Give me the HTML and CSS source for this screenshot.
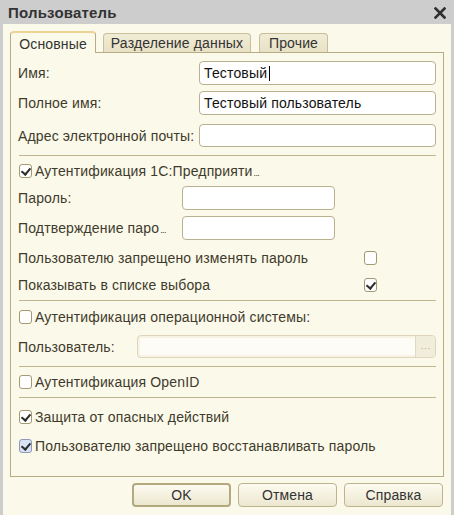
FILE: index.html
```html
<!DOCTYPE html>
<html lang="ru">
<head>
	<meta charset="UTF-8">
	<title>Пользователь</title>
	<link rel="stylesheet" href="styles.css">
</head>
<body>
	<div class="window">
		<div class="titlebar">
			<span class="title">Пользователь</span>
			<svg class="close" width="12" height="12" viewBox="0 0 12 12">
				<path d="M1.5 1.5 L10.5 10.5 M10.5 1.5 L1.5 10.5" stroke="#2f2f2f" stroke-width="2.6" stroke-linecap="square"/>
			</svg>
		</div>

		<div class="content">
			<div class="tabs">
				<div class="tab active">Основные</div>
				<div class="tab t2">Разделение данных</div>
				<div class="tab t3">Прочие</div>
			</div>

			<div class="panel">
				<div class="row r1">
					<span class="label w-main">Имя:</span>
					<div class="input grow"><span class="value">Тестовый</span><span class="caret"></span></div>
				</div>
				<div class="row r2">
					<span class="label w-main">Полное имя:</span>
					<div class="input grow"><span class="value">Тестовый пользователь</span></div>
				</div>
				<div class="row r3">
					<span class="label w-main">Адрес электронной почты:</span>
					<div class="input grow"></div>
				</div>

				<div class="sep s1"></div>

				<label class="check c1">
					<span class="box checked"></span>
					<span>Аутентификация 1С:Предприяти<span class="more">...</span></span>
				</label>
				<div class="row r4">
					<span class="label w-pass">Пароль:</span>
					<div class="input short"></div>
				</div>
				<div class="row r5">
					<span class="label w-pass">Подтверждение паро<span class="more">...</span></span>
					<div class="input short"></div>
				</div>
				<div class="row flag f1">
					<span class="label w-flag">Пользователю запрещено изменять пароль</span>
					<span class="box"></span>
				</div>
				<div class="row flag f2">
					<span class="label w-flag">Показывать в списке выбора</span>
					<span class="box checked"></span>
				</div>

				<div class="sep s2"></div>

				<label class="check c2">
					<span class="box"></span>
					<span>Аутентификация операционной системы:</span>
				</label>
				<div class="row r6">
					<span class="label w-user">Пользователь:</span>
					<div class="input grow disabled">
						<span class="fill"></span>
						<span class="pick">···</span>
					</div>
				</div>

				<div class="sep s3"></div>

				<label class="check c3">
					<span class="box"></span>
					<span>Аутентификация OpenID</span>
				</label>

				<div class="sep s4"></div>

				<label class="check c4">
					<span class="box checked"></span>
					<span>Защита от опасных действий</span>
				</label>
				<label class="check c5">
					<span class="box checked hover"></span>
					<span>Пользователю запрещено восстанавливать пароль</span>
				</label>
			</div>

			<div class="buttons">
				<button class="default">OK</button>
				<button>Отмена</button>
				<button>Справка</button>
			</div>
		</div>
	</div>
</body>
</html>
```

FILE: styles.css
```css
:root {
	--cream: #fbf9ea;
	--frame: #b7ac84;
	--text: #3f3b2c;
}

* {
	box-sizing: border-box;
}

body {
	margin: 0;
	font-family: "Liberation Sans", Arial, sans-serif;
	font-size: 14px;
	letter-spacing: 0.15px;
	color: var(--text);
	background: #cdcdcd;
}

.window {
	width: 454px;
	height: 515px;
	background: #cdcdcd;
	padding: 0 3px;
	display: flex;
	flex-direction: column;
}

/* title bar */

.titlebar {
	height: 24px;
	display: flex;
	align-items: center;
	justify-content: space-between;
	padding: 1px 5px 0 5px;
}

.title {
	font-weight: bold;
	font-size: 15px;
	letter-spacing: 0.2px;
	color: #333;
}

.close {
	margin-top: 1px;
}

.content {
	flex: 1;
	background: var(--cream);
	padding: 7px 8px 0 7px;
}

/* tabs */

.tabs {
	display: flex;
	align-items: flex-end;
	height: 21px;
}

.tab {
	height: 19px;
	margin-right: 7px;
	line-height: 18px;
	text-align: center;
	color: #333;
	background: linear-gradient(#f1ecd6, #e8e1c6);
	border: 1px solid #c9be98;
	border-bottom: none;
	border-radius: 4px 4px 0 0;
}

.tab.t2 {
	width: 148px;
	margin-right: 8px;
}

.tab.t3 {
	width: 69px;
}

.tab.active {
	position: relative;
	z-index: 1;
	width: 86px;
	height: 22px;
	margin-bottom: -1px;
	padding-top: 2px;
	background: var(--cream);
	border-color: var(--frame);
	border-top: 2px solid #ecd495;
}

/* tab page */

.panel {
	width: 434px;
	height: 425px;
	border: 1px solid var(--frame);
	padding: 0 7px 0 7px;
	display: flex;
	flex-direction: column;
}

.row {
	display: flex;
	align-items: center;
	height: 24px;
}

.label {
	flex: none;
	white-space: nowrap;
}

/* cut-off captions end in small tight dots */
.more {
	font-size: 9px;
	letter-spacing: -0.6px;
	margin-left: 1px;
}

.w-main { width: 181px; }
.w-pass { width: 164px; }
.w-user { width: 119px; }
.w-flag { width: 346px; }

.input {
	height: 100%;
	background: #fff;
	border: 1px solid #b9b08d;
	border-radius: 4px;
	display: flex;
	align-items: center;
	padding: 0 4px;
	color: #111;
}

.grow { flex: 1; }
.short { width: 153px; }

.caret {
	width: 1px;
	height: 15px;
	margin-left: 2px;
	background: #000;
}

.input.disabled {
	padding: 0;
	background: #f7f4e4;
	border-color: #ddd6bd;
	overflow: hidden;
}

.input.disabled .fill {
	flex: 1;
	align-self: stretch;
	margin: 2px 0 2px 2px;
	background: #fdfcf6;
}

.pick {
	width: 20px;
	align-self: stretch;
	border-left: 1px solid #e0dac4;
	background: #f1eddb;
	color: #b5b09c;
	font-size: 10px;
	letter-spacing: 0;
	display: flex;
	align-items: center;
	justify-content: center;
	padding-top: 3px;
}

.sep {
	height: 1px;
	flex: none;
	background: #bfb58e;
	margin-left: 1px;
}

.check {
	display: flex;
	align-items: center;
	height: 16px;
	gap: 3px;
	padding-left: 1px;
}

.box {
	flex: none;
	width: 13px;
	height: 14px;
	border: 1px solid #a49a72;
	border-radius: 3px;
	background: #fff;
	position: relative;
}

.box.checked::after {
	content: "";
	position: absolute;
	left: 3px;
	top: 1px;
	width: 4px;
	height: 7px;
	border: solid #2e2e2e;
	border-width: 0 2px 2px 0;
	transform: rotate(40deg);
}

.box.hover {
	background: #d9e3f6;
	border-color: #8f98b5;
}

/* vertical rhythm of the page */

.r1 { margin-top: 8px; }
.r2 { margin-top: 6px; }
.r3 { margin-top: 9px; height: 23px; }
.s1 { margin-top: 8px; }
.c1 { margin-top: 7px; }
.r4 { margin-top: 7px; }
.r5 { margin-top: 6px; }
.f1 { margin-top: 10px; height: 16px; }
.f2 { margin-top: 11px; height: 16px; }
.s2 { margin-top: 7px; }
.c2 { margin-top: 8px; }
.r6 { margin-top: 10px; height: 23px; }
.s3 { margin-top: 8px; }
.c3 { margin-top: 7px; }
.s4 { margin-top: 7px; }
.c4 { margin-top: 11px; }
.c5 { margin-top: 13px; }

/* dialog buttons */

.buttons {
	display: flex;
	justify-content: flex-end;
	gap: 7px;
	margin-top: 6px;
}

button {
	width: 99px;
	height: 24px;
	font-family: inherit;
	font-size: 14px;
	letter-spacing: 0.15px;
	color: #333;
	background: linear-gradient(#fdfbf1, #ece7cf);
	border: 1px solid #bdb38e;
	border-radius: 4px;
	padding: 0;
}

button.default {
	border: 2px solid #b3a97f;
}
```
